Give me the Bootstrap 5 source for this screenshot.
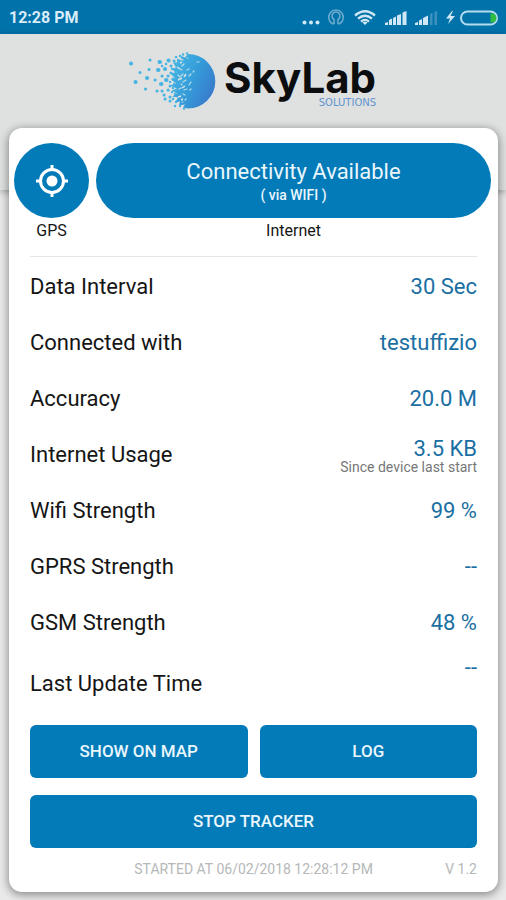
<!DOCTYPE html>
<html lang="en">
<head>
<meta charset="utf-8">
<meta name="viewport" content="width=device-width, initial-scale=1">
<title>SkyLab Tracker</title>
<link href="https://cdn.jsdelivr.net/npm/bootstrap@5.3.0/dist/css/bootstrap.min.css" rel="stylesheet">
<style>
  :root { --sky: #037bb8; --sky-dark: #0272aa; --value: #1a6fa3; }
  body { font-family: Roboto, "Liberation Sans", sans-serif; background: #e9e9e9; color: #151515; }
  .status-bar { background: var(--sky-dark); color: #d9ecf7; height: 34px; padding: 2px 7px 0 9px; font-size: 16px; }
  .status-bar svg { margin-top: -2px; }
  .brand-bar { background: #dfe1e1; height: 156px; padding: 16px 4px 0 0; box-shadow: 0 2px 7px rgba(0,0,0,.3); }
  .brand-name { font: 700 42px/40px Inter, "Open Sans", sans-serif; color: #0b0d0f; margin-top: 8px; }
  .brand-sub { font: 400 10px/10px "DejaVu Sans", sans-serif; color: #5f93cf; }
  .panel { margin: -62px 8px 8px 9px; border-radius: 13px; box-shadow: 0 2px 9px 1px rgba(0,0,0,.4); padding: 15px 7px 13px 5px; position: relative; }
  .tops { gap: 7px; }
  .gps-btn { width: 75px; height: 75px; background: var(--sky); }
  .net-btn { height: 75px; background: var(--sky); color: #eaf6fd; border-radius: 38px; }
  .net-title { font-size: 22px; line-height: 26px; margin-top: 3px; }
  .net-via { font-size: 14px; line-height: 20px; font-weight: 500; }
  .cap { font-size: 16px; line-height: 26px; }
  .inner { padding: 0 14px 0 16px; }
  .stats { border-top: 1px solid #e6e6e6; margin-top: 12px; padding-top: 2px; font-size: 22px; line-height: 24px; }
  .stat { height: 56px; }
  .stat dd { color: var(--value); }
  .stat small { font-size: 14px; line-height: 12px; color: #777; }
  .stat-last { height: 63px; padding-top: 2px; }
  .stat-last dd { margin-bottom: 32px; }
  .act { background: var(--sky); color: #eaf6fd; height: 53px; border-radius: 6px; font-size: 17px; font-weight: 500; }
  .act:hover, .act:focus { background: var(--sky-dark); color: #fff; }
  .acts { gap: 17px 12px; margin-top: 11px; }
  .foot { font-size: 14px; line-height: 20px; color: #b5b8b8; margin-top: 11px; padding-left: 32px; }
</style>
<script src="https://cdn.jsdelivr.net/npm/bootstrap@5.3.0/dist/js/bootstrap.bundle.min.js"></script>
</head>
<body>
<div class="status-bar d-flex align-items-center justify-content-between">
  <span class="fw-bold">12:28 PM</span>
  <svg width="198" height="34" viewBox="302 0 198 34" fill="#d0e8f5" aria-hidden="true">
    <g><circle cx="305.500" cy="22.500" r="2"/><circle cx="312" cy="22.500" r="2"/><circle cx="318.500" cy="22.500" r="2"/></g>
    <g fill="none" stroke="#70add0" stroke-width="1.500"><path d="M333 23.500a7.300 7.300 0 1 1 8 0M335 24v-4.500a4 4 0 1 1 4 0V24"/><path d="M333 23.500l2 .5M339 24l2-.5"/></g>
    <g fill="none" stroke="#d0e8f5" stroke-width="2.300"><path d="M356 15.500q10-8.500 20 0M359 18.700q7-6 14 0M362 21.600q4-3.400 8 0"/></g>
    <path d="M366 25l-2.500-2.500q2.500-2 5 0z"/>
    <path d="M386 25v-2l3-1v3zM390 25v-5l3-1.500V25zM394 25v-7l3-1.500V25zM398 25V15.500l4-1.500v11zM403.500 25V12.500l4-1.500v14z"/>
    <path d="M416 25v-2l3-1v3zM420 25v-4.500l3-1.500v6zM424 25v-7l5-2.500V25z"/>
    <path fill="#3c91bf" d="M431 25V14l2.500-1v12zM435.500 25V12l2.500-1v14z"/>
    <path d="M453 11l-6 7.500h4l-2 5.500 7-8h-4.500l2.500-5z"/>
    <rect x="462" y="11.500" width="36" height="13" rx="6.500" fill="none" stroke="#b5dced" stroke-width="2"/>
    <path fill="#2ebc43" d="M491.500 13.500h1.500a4.500 4.500 0 0 1 0 9h-1.500z"/>
  </svg>
</div>
<header class="brand-bar d-flex justify-content-center align-items-start">
  <svg class="me-2" width="90" height="64" viewBox="126 50 90 64" aria-hidden="true">
    <defs><linearGradient id="globe" gradientUnits="userSpaceOnUse" x1="165" y1="70" x2="215" y2="92"><stop offset="0" stop-color="#47b9e6"/><stop offset=".55" stop-color="#359bd8"/><stop offset="1" stop-color="#3979cb"/></linearGradient></defs>
    <path fill="url(#globe)" d="M188 54a27.300 27.300 0 1 1 0 54.600l-5-1 2-3-6 1 1-4-5 1 3-5-6-1 5-3-5-3 5-2-7-3 6-2-5-4 4-2-5-4 5-1-3-4 4-1-3-5 4 0 0-4 5 2-2-5 5 2z"/>
    <g fill="none" stroke="#47b4e2" stroke-linecap="round">
      <path stroke-width="4" d="M131 63.500h.1M135.500 82h.1M159.500 62h.5M168.500 60.500h.1M158 70h.5M161 84h.5M166 80h.5M165 69h.1M147 78h.1"/>
      <path stroke-width="3" d="M140 72.500h.1M149 69.500h.1M145.500 89h.1M150 60h.1M155 80h.1M162 76h.1M157 91h.1M162 91h.1M164 95h.1M168 90h.1M170 86h.1M165 99h.1M170 97h.1M170 101h.1M171 66h.1M174 61h.1M171 73h.1M168 76h.1M173 79h.1"/>
      <path stroke-width="2.400" d="M176 57h.1M180 56h.1M183 54.500h.1M187 53.500h.1M176 64h.1M172 69h.1M176 72h.1M174 76h.1M170 82h.1M174 84h.1M173 88h.1M172 92h.1M175 94h.1M173 99h.1M176 102h.1M175 106h.1M180 106h.1M184 108.500h.1M178 61h.1M166 64h.1M162 66h.1M176 90h.1"/>
    </g>
    <g fill="none" stroke="#b9dce9" stroke-linecap="round" stroke-width="1.200">
      <path d="M181 59l2 1M184 64l-2 2M180 69l2 1M187 70l2-1M183 74l-2 2M189 76l2-2M193 72l1-1M186 80l-3 2M191 82l-2 3M181 84l1 1M187 89l-3 1M183 94l2 1M190 90l1-1M186 99l-1 1M182 102h1M187 58h1M197 62h2M178 75l2 2M179 89l2-1"/>
    </g>
    <g fill="none" stroke="#dfe1e1" stroke-width="1.500"><path d="M177 67l3 2M178 80l4-2M178 97l3-1M180 63l2-1M182 88l3-2M184 77l2-3M181 100l2-1"/></g>
  </svg>
  <div class="d-flex flex-column align-items-end">
    <div class="brand-name">SkyLab</div>
    <div class="brand-sub">SOLUTIONS</div>
  </div>
</header>
<main class="panel bg-white">
  <div class="tops d-flex text-center">
    <div>
      <button type="button" id="gps" class="gps-btn btn border-0 rounded-circle p-0 d-flex align-items-center justify-content-center" aria-labelledby="gps-cap">
        <svg width="32" height="32" viewBox="0 0 32 32" aria-hidden="true"><circle cx="16" cy="16" r="5.500" fill="#fff"/><circle cx="16" cy="16" r="11.500" fill="none" stroke="#fff" stroke-width="3"/><path stroke="#fff" stroke-width="3" d="M16 0v5M16 27v5M0 16h5M27 16h5"/></svg>
      </button>
      <label for="gps" id="gps-cap" class="cap d-block">GPS</label>
    </div>
    <div class="flex-grow-1">
      <button type="button" id="net" class="net-btn btn border-0 w-100 p-0 d-flex flex-column align-items-center justify-content-center">
        <span class="net-title">Connectivity Available</span>
        <span class="net-via">( via WIFI )</span>
      </button>
      <label for="net" class="cap d-block">Internet</label>
    </div>
  </div>
  <div class="inner">
    <dl class="stats mb-0">
      <div class="stat d-flex align-items-center justify-content-between"><dt class="fw-normal">Data Interval</dt><dd class="mb-0">30 Sec</dd></div>
      <div class="stat d-flex align-items-center justify-content-between"><dt class="fw-normal">Connected with</dt><dd class="mb-0">testuffizio</dd></div>
      <div class="stat d-flex align-items-center justify-content-between"><dt class="fw-normal">Accuracy</dt><dd class="mb-0">20.0 M</dd></div>
      <div class="stat d-flex align-items-center justify-content-between"><dt class="fw-normal">Internet Usage</dt><dd class="mb-0 text-end">3.5 KB<small class="d-block">Since device last start</small></dd></div>
      <div class="stat d-flex align-items-center justify-content-between"><dt class="fw-normal">Wifi Strength</dt><dd class="mb-0">99 %</dd></div>
      <div class="stat d-flex align-items-center justify-content-between"><dt class="fw-normal">GPRS Strength</dt><dd class="mb-0">--</dd></div>
      <div class="stat d-flex align-items-center justify-content-between"><dt class="fw-normal">GSM Strength</dt><dd class="mb-0">48 %</dd></div>
      <div class="stat stat-last d-flex align-items-center justify-content-between"><dt class="fw-normal">Last Update Time</dt><dd>--</dd></div>
    </dl>
    <div class="acts d-flex flex-wrap">
      <button type="button" class="act btn border-0 col">SHOW ON MAP</button>
      <button type="button" class="act btn border-0 col">LOG</button>
      <button type="button" class="act btn border-0 w-100">STOP TRACKER</button>
    </div>
    <footer class="foot d-flex">
      <span class="flex-grow-1 text-center">STARTED AT 06/02/2018 12:28:12 PM</span>
      <span>V 1.2</span>
    </footer>
  </div>
</main>
</body>
</html>
